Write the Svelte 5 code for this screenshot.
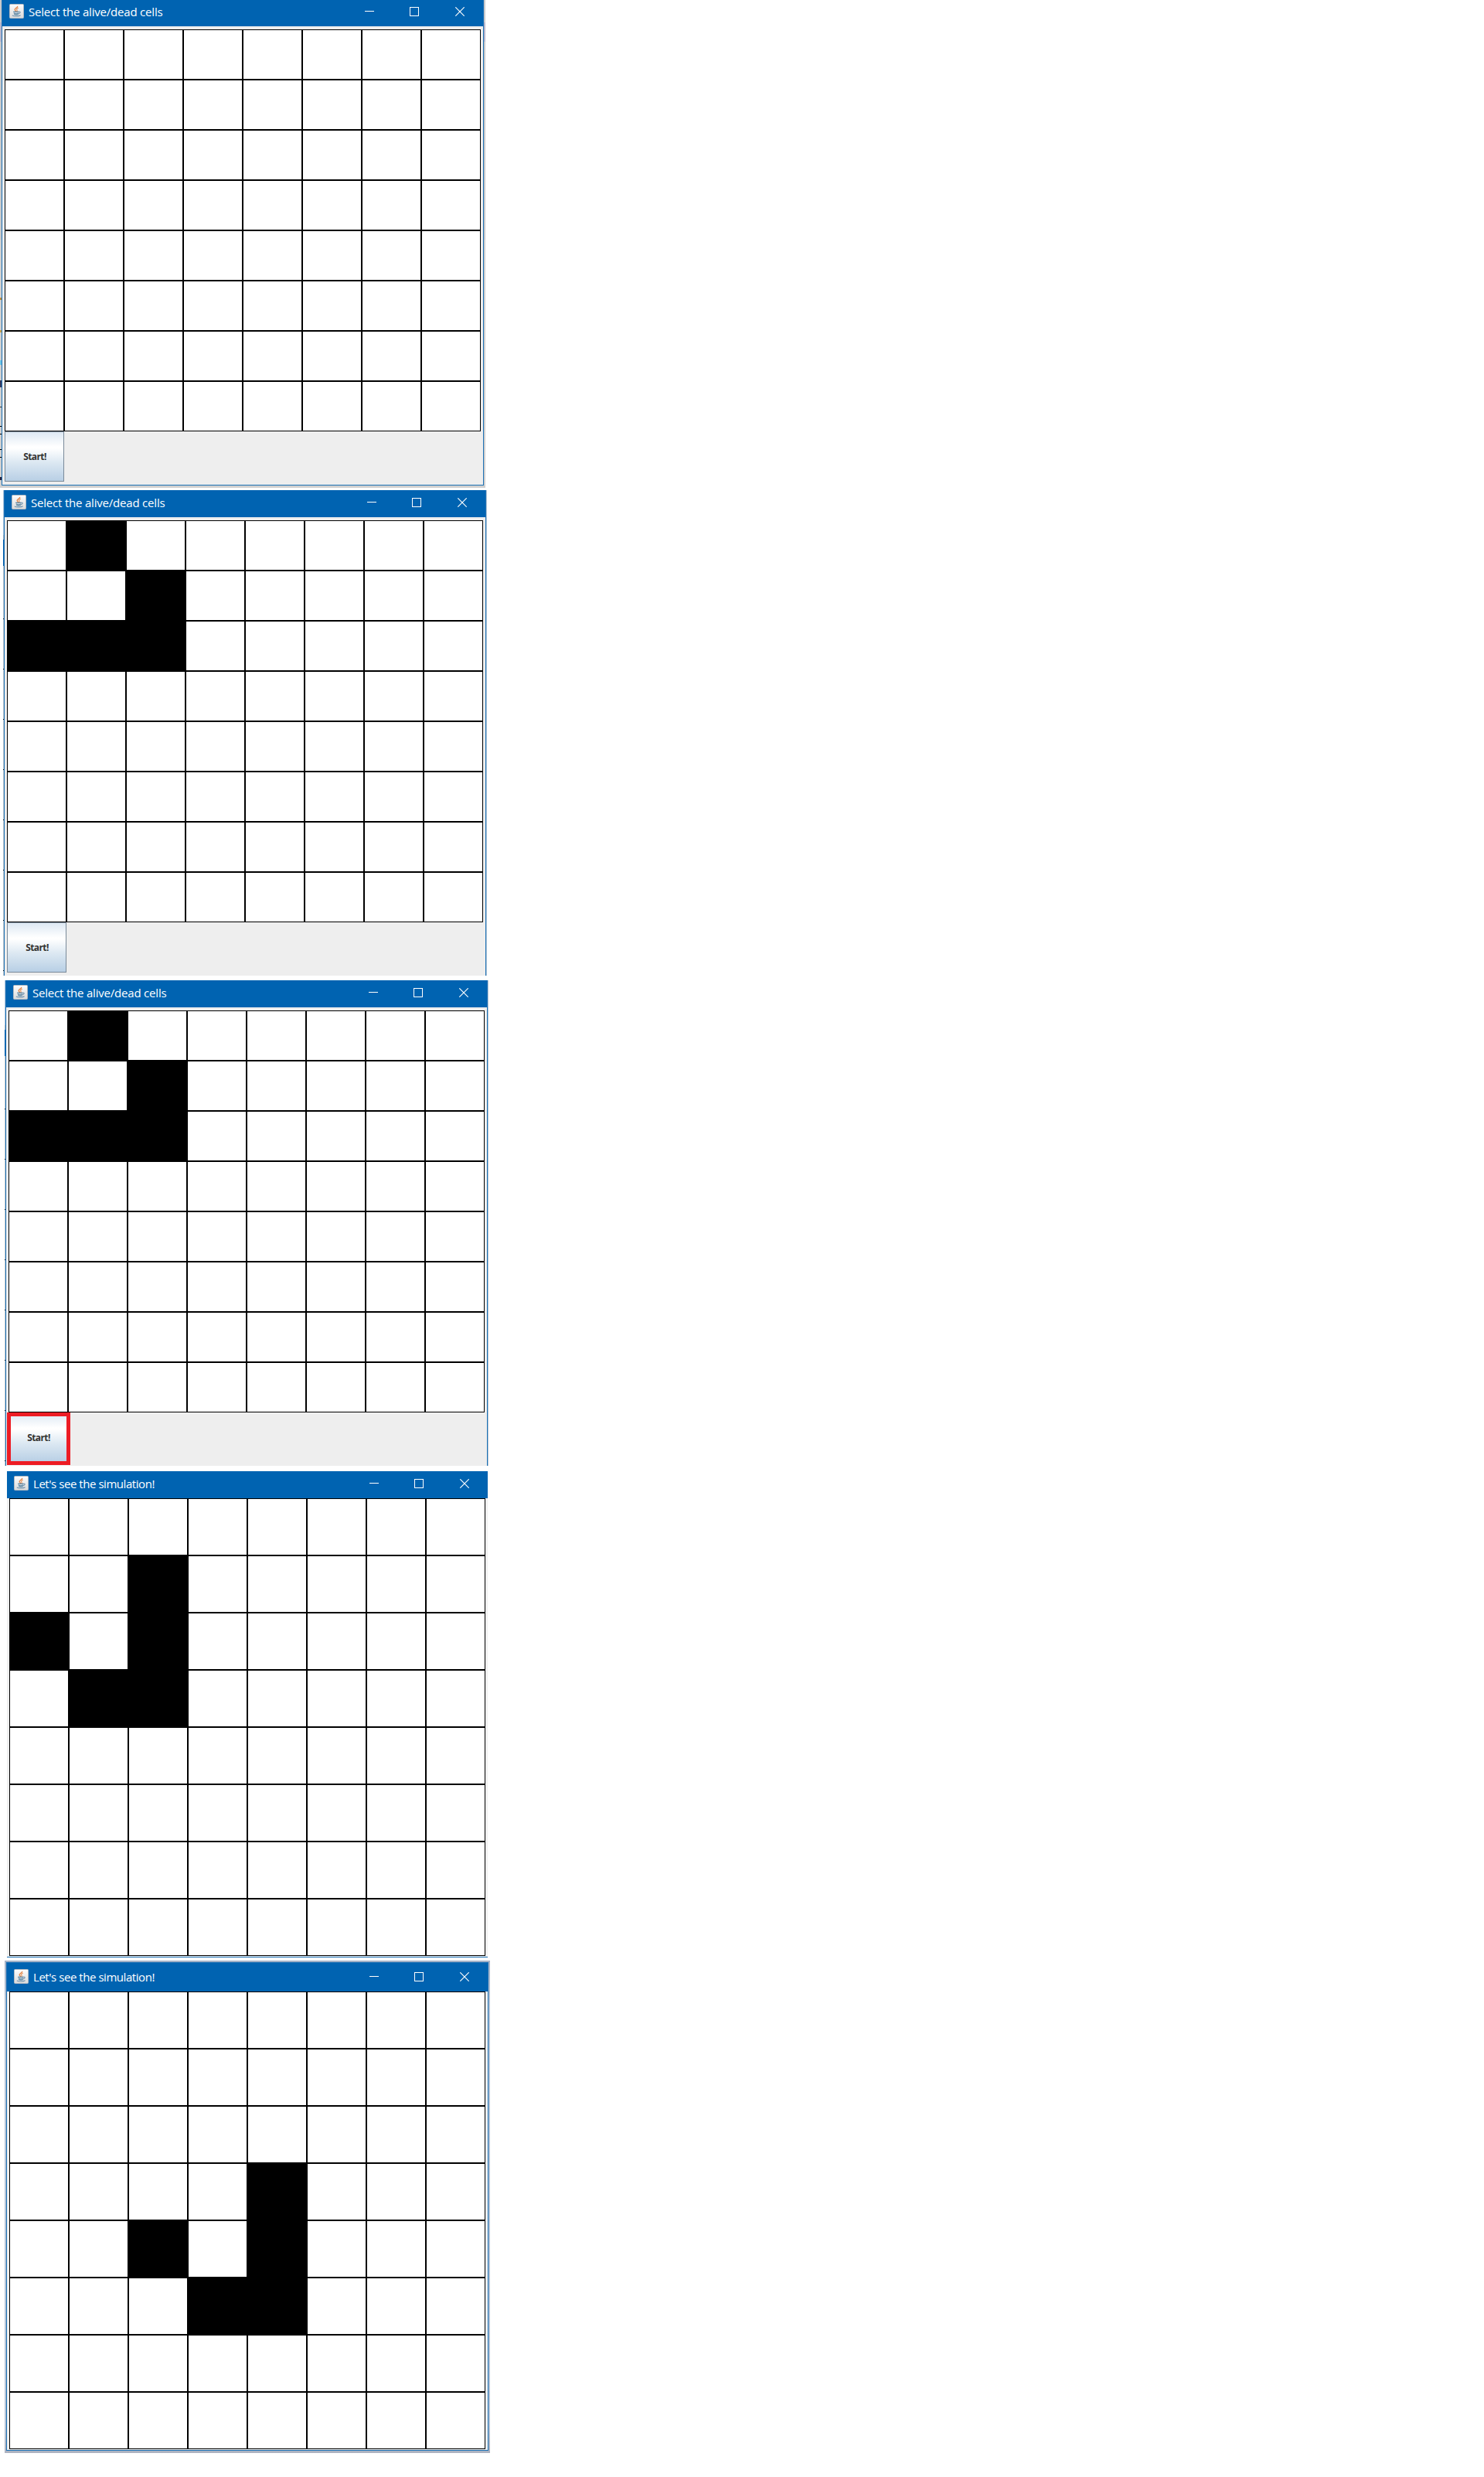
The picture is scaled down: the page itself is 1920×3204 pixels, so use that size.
<script>
  const glider = ['.#......', '..#.....', '###.....'];
  const shots = [
    { id: 'empty', title: 'Select the alive/dead cells', setup: true, rows: [] },
    { id: 'chosen', title: 'Select the alive/dead cells', setup: true, rows: glider },
    { id: 'press', title: 'Select the alive/dead cells', setup: true, rows: glider },
    {
      id: 'first',
      title: "Let's see the simulation!",
      setup: false,
      rows: ['........', '..#.....', '#.#.....', '.##.....']
    },
    {
      id: 'later',
      title: "Let's see the simulation!",
      setup: false,
      rows: ['', '', '', '....#...', '..#.#...', '...##...']
    }
  ];
  const eight = [0, 1, 2, 3, 4, 5, 6, 7];
</script>

<main>
  {#each shots as shot}
    <section class="shot {shot.id}">
      <div class="window">
        <header>
          <svg class="java" width="19" height="19" viewBox="0 0 19 19">
            <defs>
              <linearGradient id="tile-{shot.id}" x1="0" y1="0" x2="0" y2="1">
                <stop offset="0" stop-color="#fdfdfd" />
                <stop offset="1" stop-color="#d9dadb" />
              </linearGradient>
            </defs>
            <rect x="0.5" y="0.5" width="18" height="18" rx="1" fill="url(#tile-{shot.id})" stroke="#b3bac2" />
            <path d="M10.7 2.8C11 5.1 7 5.6 7.2 7.5c.1 1 1 1.5 1.6 2.3" fill="none" stroke="#e3874b" stroke-width="1.4" />
            <path d="M11.9 5.2C9.6 6 9 7 10 8.1c.5.6.3 1.2-.3 1.8" fill="none" stroke="#e99a62" stroke-width="1.2" />
            <path d="M5.2 10.3h7.3M5.8 12c1.6.8 4.6.8 6.4 0M6.2 13.5c1.6.7 4 .7 5.6 0" fill="none" stroke="#53809f" stroke-width="1.2" />
            <path d="M12.4 10.3c2.3-.6 2.5 1.6-.3 2.3M3.8 15c2.6 1.3 8.3 1.3 10.8-.3" fill="none" stroke="#6d91ac" stroke-width="1.1" />
          </svg>
          <h1 class:tight={!shot.setup}>{shot.title}</h1>
          <svg class="controls" width="129" height="12" viewBox="0 0 129 12" fill="none" stroke="#fff">
            <path d="M0 5.5h12" />
            <rect x="58.5" y="0.5" width="11" height="11" />
            <path d="M117.3.3l11.4 11.4M128.7.3l-11.4 11.4" stroke-width="1.1" />
          </svg>
        </header>
        <div class="content" class:setup={shot.setup}>
          <div class="board">
            {#each eight as r}
              {#each eight as c}
                <span class="cell" class:alive={shot.rows[r]?.[c] === '#'}></span>
              {/each}
            {/each}
          </div>
          {#if shot.setup}
            <div class="footer">
              <button class:marked={shot.id === 'press'}><span>Start!</span></button>
            </div>
          {/if}
        </div>
      </div>
    </section>
  {/each}
</main>

<style>
  :global(body) {
    margin: 0;
    background: #fff;
  }
  main {
    display: flex;
    flex-direction: column;
    align-items: flex-start;
    height: 3204px;
  }
  .shot {
    box-sizing: border-box;
    flex: none;
  }
  .window {
    width: 622px;
    border: solid #1b70b4;
    border-width: 0 1px;
  }
  /* slivers of the desktop behind each window */
  .empty {
    padding: 0 2px 3px;
    background:
      linear-gradient(
          transparent 385px, #b98a3c 385px 388px, transparent 388px 427px, #c8a04a 427px 430px,
          transparent 430px 466px, #6cc6e8 466px 472px, transparent 472px 492px, #333a60 492px 501px,
          transparent 501px 526px, #333 526px 527px, transparent 527px 551px, #000 551px 552px,
          transparent 552px 561px, #000 561px 562px, transparent 562px 581px, #000 581px 582px,
          transparent 582px 591px, #000 591px 592px, transparent 592px 617px, #2a2440 617px 621px,
          transparent 621px
        )
        0 0 / 2px 100% no-repeat,
      linear-gradient(#c9cacc 0 29px, #b7b6cc 29px 54px, #c8c9cb 54px 310px, #d0d0d0 310px);
  }
  .empty .window {
    border-bottom-width: 1px;
  }
  .chosen,
  .press {
    padding: 0 1px;
    background:
      repeating-linear-gradient(transparent 0 64px, #111 64px 65px) 0 102px / 1px 100% no-repeat,
      linear-gradient(#a9c4de 0 58px, #9bb0c4 58px 64px, #0760ad 64px 98px, #c3c8ce 98px) 0 0 / 1px 100% no-repeat;
    box-shadow: inset -1px 0 #b4c6d8;
  }
  .chosen {
    margin: 3px 0 0 4px;
  }
  .press {
    margin: 6px 0 0 6px;
  }
  .first {
    margin: 7px 0 0 9px;
  }
  .first .window {
    border-width: 0 0 1px;
  }
  .later {
    margin: 4px 0 0 6px;
    padding: 2px 2px 3px;
    background: linear-gradient(#a5b3c8, #b5c4d7 60px, #b5c4d7 600px, #adb2c0);
  }
  .later .window {
    border-width: 1px;
  }
  header {
    box-sizing: border-box;
    height: 35px;
    padding: 0 24px 10px 9px;
    display: flex;
    align-items: flex-end;
    background: #0063b1;
  }
  .empty header {
    height: 34px;
  }
  .later header {
    height: 37px;
  }
  .java {
    flex: none;
    display: block;
  }
  h1 {
    margin: 0 auto -1px 6px;
    font: 400 15px/20px 'Open Sans', 'Noto Sans', sans-serif;
    letter-spacing: -0.2px;
    color: #fff;
    white-space: nowrap;
  }
  h1.tight {
    letter-spacing: -0.45px;
  }
  .controls {
    flex: none;
    display: block;
    margin-bottom: 3px;
  }
  .content {
    padding: 0 3px 1px;
    background: #f0f0f0;
  }
  .content.setup {
    padding: 4px 3px;
    background: #eee;
  }
  .board {
    display: grid;
    grid-template-columns: repeat(8, 77px);
    grid-auto-rows: 74px;
  }
  .setup .board {
    grid-auto-rows: 65px;
  }
  .cell {
    border: 1px solid #000;
    background: #fff;
  }
  .alive {
    background: #000;
  }
  .footer {
    height: 65px;
  }
  button {
    box-sizing: border-box;
    position: relative;
    display: flex;
    align-items: center;
    justify-content: center;
    width: 77px;
    height: 65px;
    padding: 0 0 0 1px;
    border: 1px solid #7a8a99;
    border-radius: 0;
    background: linear-gradient(#dde8f3, #fff 30%, #fff 33%, #dce8f2 62%, #b8cfe5);
    font: 700 12px/16px 'Open Sans', 'Noto Sans', sans-serif;
    letter-spacing: -0.6px;
    color: #333;
  }
  .marked::after {
    content: '';
    position: absolute;
    inset: -1px -4px -4px -3px;
    border: 5px solid #ed1c24;
  }
</style>
